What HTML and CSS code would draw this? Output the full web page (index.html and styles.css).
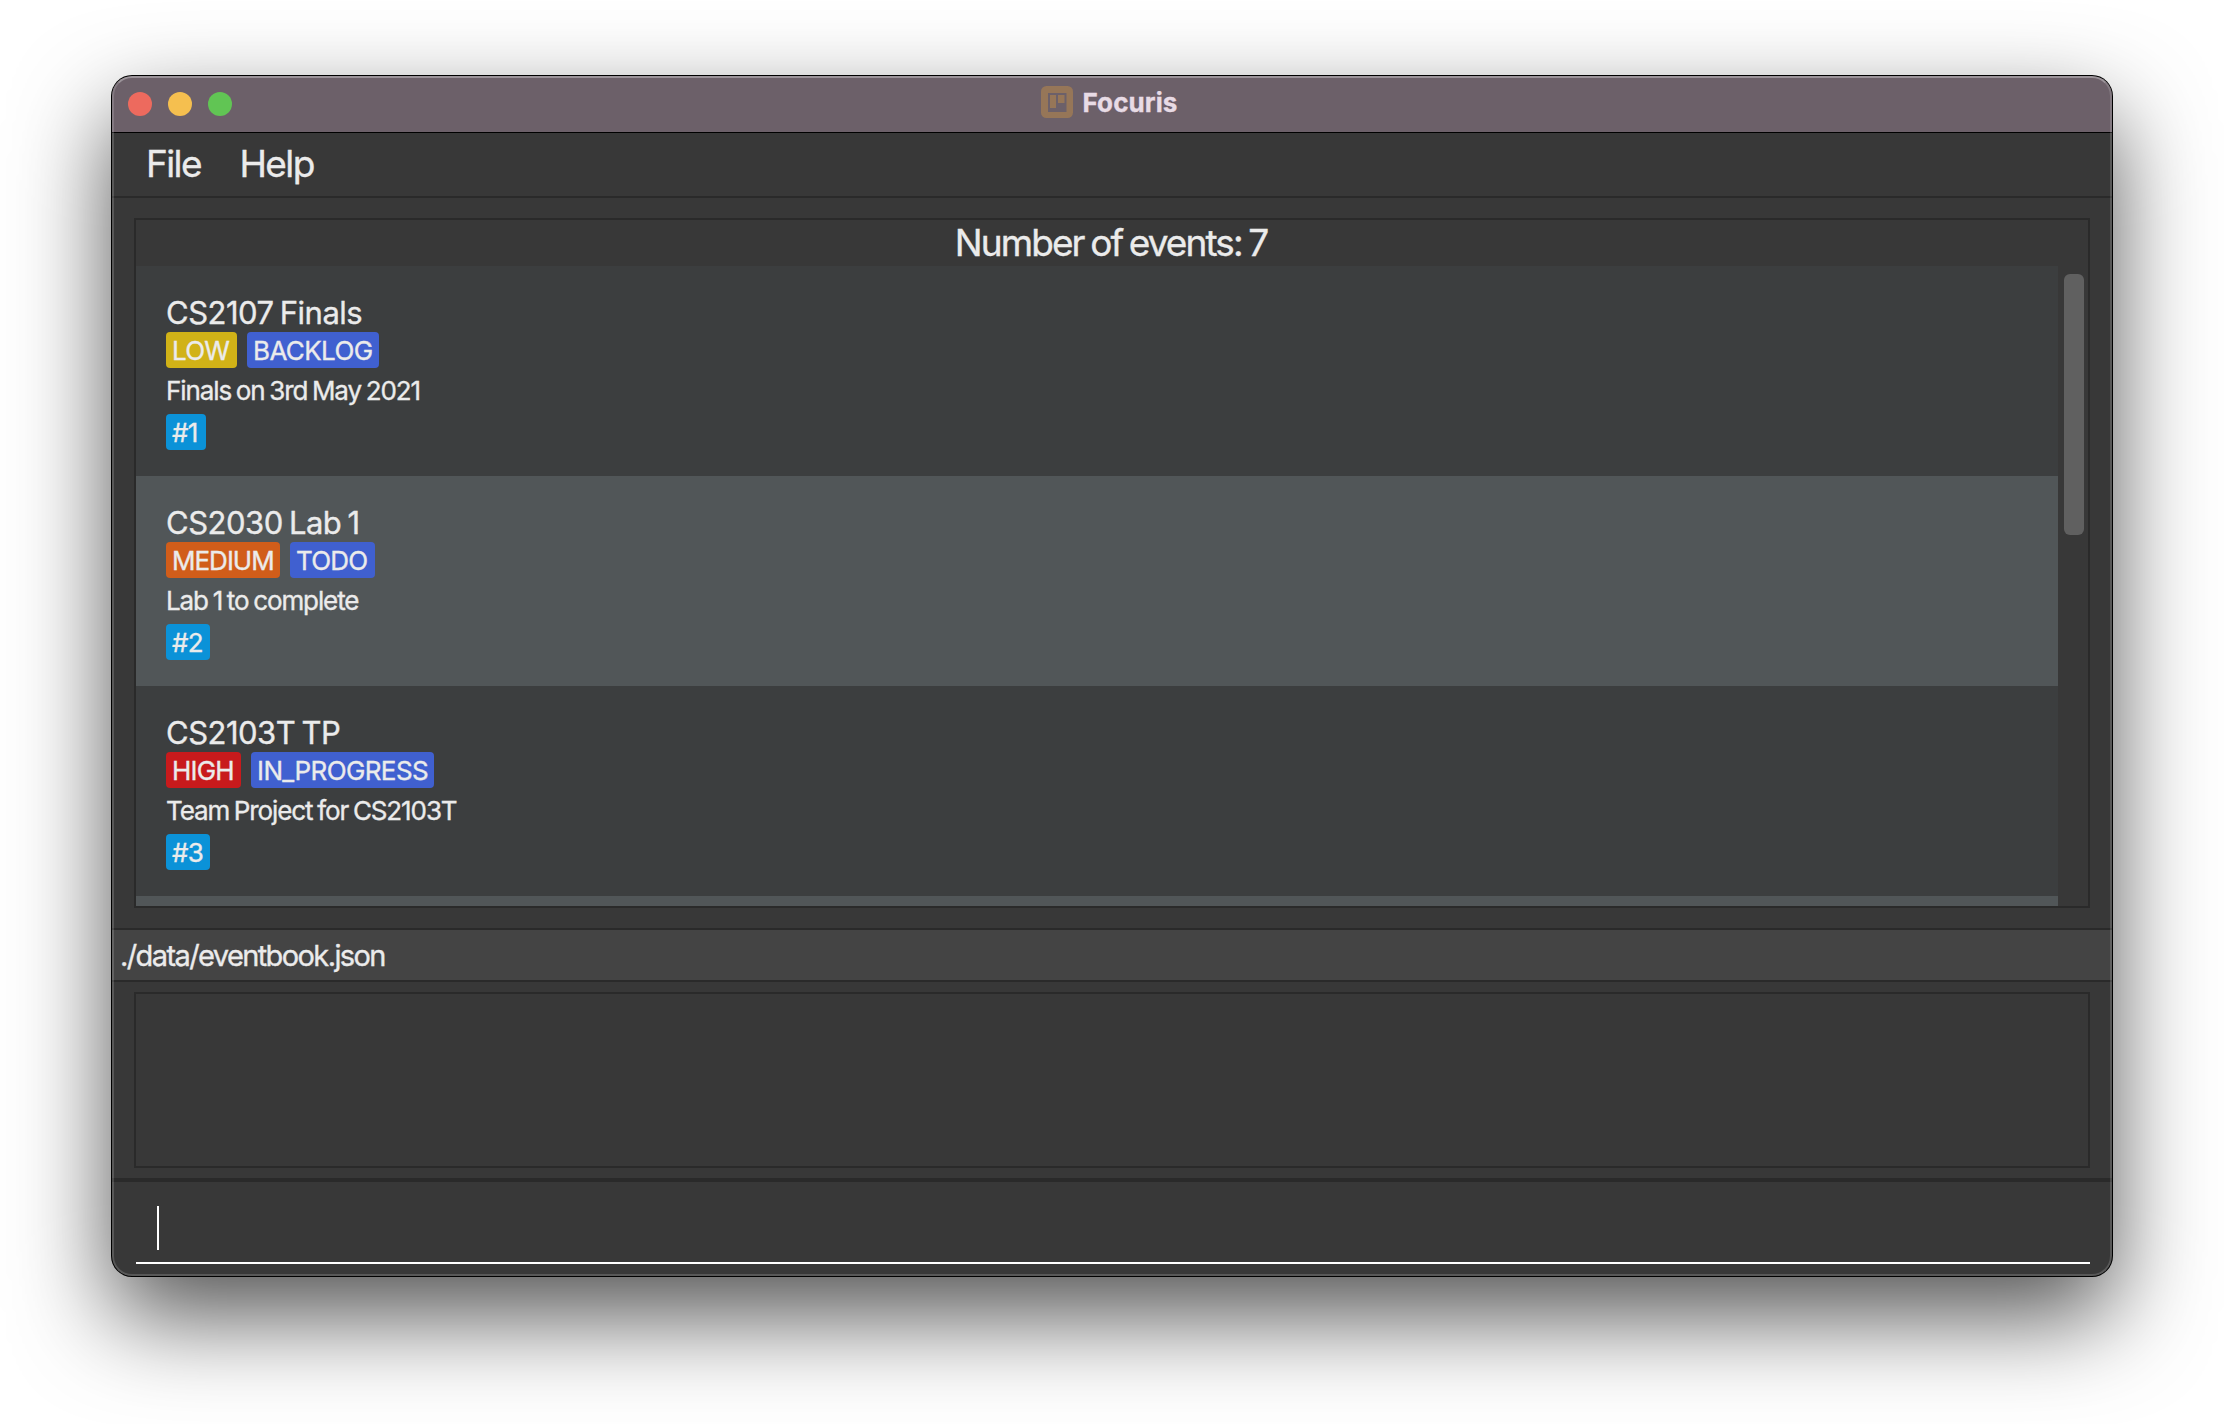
FILE: index.html
```html
<!DOCTYPE html>
<html lang="en">
<head>
<meta charset="utf-8">
<title>Focuris</title>
<link rel="stylesheet" href="styles.css">
</head>
<body>
<div class="window">
  <header class="titlebar">
    <div class="lights"><i class="light close"></i><i class="light minimize"></i><i class="light zoom"></i></div>
    <div class="title">
      <svg class="app-icon" viewBox="0 0 32 32" width="32" height="32">
        <rect width="32" height="32" rx="5.5" fill="#967658"/>
        <path fill="#6c6069" d="M7 7h18.500v19H7z"/>
        <path fill="#967658" d="M9 9h6v13H9zM17 9h6.500v8H17z"/>
      </svg>
      <span class="name">Focuris</span>
    </div>
  </header>
  <nav class="menubar"><span>File</span><span>Help</span></nav>
  <main class="main">
    <section class="panel">
      <h1 class="count">Number of events: 7</h1>
      <div class="scroll">
        <div class="list">
          <article class="event">
            <h2>CS2107 Finals</h2>
            <div class="tags"><span class="tag low">LOW</span><span class="tag status backlog">BACKLOG</span></div>
            <p>Finals on 3rd May 2021</p>
            <span class="tag id first">#1</span>
          </article>
          <article class="event alt">
            <h2>CS2030 Lab 1</h2>
            <div class="tags"><span class="tag medium">MEDIUM</span><span class="tag status todo">TODO</span></div>
            <p>Lab 1 to complete</p>
            <span class="tag id">#2</span>
          </article>
          <article class="event">
            <h2>CS2103T TP</h2>
            <div class="tags"><span class="tag high">HIGH</span><span class="tag status in-progress">IN_PROGRESS</span></div>
            <p>Team Project for CS2103T</p>
            <span class="tag id">#3</span>
          </article>
          <article class="event alt"></article>
        </div>
        <div class="scrollbar"><div class="thumb"></div></div>
      </div>
    </section>
  </main>
  <div class="path">./data/eventbook.json</div>
  <section class="result"><div class="result-box"></div></section>
  <footer class="command"><div class="field"><i class="caret"></i></div></footer>
</div>
</body>
</html>
```
FILE: styles.css
```css
* { box-sizing: border-box; margin: 0; padding: 0; }

body {
  width: 2224px;
  height: 1424px;
  padding: 76px 112px;
  overflow: hidden;
  background: #fff;
  color: #ebebeb;
  font-family: Inter, "Liberation Sans", sans-serif;
  white-space: nowrap;
  -webkit-text-stroke: 0.35px currentColor;
}

.window {
  position: relative;
  display: flex;
  flex-direction: column;
  width: 2000px;
  height: 1200px;
  border-radius: 20px;
  overflow: hidden;
  background: #383838;
  box-shadow: 0 0 0 1px #000, 0 40px 96px rgba(0, 0, 0, 0.68);
}

/* light rim along the inside of the window edge */
.window::after {
  content: "";
  position: absolute;
  inset: 0;
  border-radius: 20px;
  border: 2px solid rgba(255, 255, 255, 0.16);
  border-top-color: rgba(255, 255, 255, 0.32);
}

.titlebar {
  display: grid;
  grid-template-columns: 1fr auto 1fr;
  height: 57px;
  background: #6c6069;
  border-bottom: 1px solid #000;
}

.lights { display: flex; gap: 16px; padding: 16px; }
.light { width: 24px; height: 24px; border-radius: 50%; }
.close { background: #ed6a5e; }
.minimize { background: #f5bf4f; }
.zoom { background: #61c554; }

.title { display: flex; gap: 9px; padding: 10px 5px 0 0; color: #e8dbe5; }
.name { font-size: 26px; font-weight: 700; line-height: 34px; letter-spacing: 0.1px; }

.menubar {
  display: flex;
  gap: 38.5px;
  height: 65px;
  padding-left: 34px;
  border-bottom: 2px solid #2a2a2a;
  font-size: 37px;
  line-height: 62px;
  letter-spacing: -1.6px;
}

.main { padding: 20px 22px; height: 730px; }

.panel {
  display: flex;
  flex-direction: column;
  height: 690px;
  border: 2px solid #2a2a2a;
}

.count {
  height: 46px;
  padding-right: 2px;
  text-align: center;
  font-size: 37px;
  font-weight: 400;
  line-height: 46px;
  letter-spacing: -1.9px;
  word-spacing: -2px;
}

.scroll { display: flex; height: 640px; }
.list { flex: none; width: 1922px; overflow: hidden; }

.event { height: 210px; padding: 30px; background: #3c3e3f; }
.alt { background: #515658; }

.event h2 {
  height: 36px;
  font-size: 31px;
  font-weight: 400;
  line-height: 34px;
  letter-spacing: -0.5px;
  word-spacing: -2px;
}

.tags { display: flex; gap: 10px; }

.tag {
  display: inline-block;
  width: 44px;
  height: 36px;
  padding-left: 6px;
  border-radius: 4px;
  font-size: 26px;
  line-height: 37px;
  letter-spacing: -0.8px;
}

.low { width: 71px; background: #d1b217; }
.medium { width: 114px; background: #d15d1a; letter-spacing: -1px; }
.high { width: 75px; background: #c81a1c; }
.status { background: #4060d0; }
.backlog { width: 132px; letter-spacing: -0.6px; }
.todo { width: 85px; }
.in-progress { width: 183px; letter-spacing: -0.6px; }
.id { background: #0b92d8; }
.first { width: 40px; }

.event p {
  height: 46px;
  font-size: 26px;
  line-height: 46px;
  letter-spacing: -1.1px;
  word-spacing: -1.5px;
}

.scrollbar { padding: 8px 0 0 6px; }
.thumb { width: 20px; height: 261px; border-radius: 6px; background: #606060; }

.path {
  height: 54px;
  padding-left: 8px;
  border: solid #2a2a2a;
  border-width: 2px 0;
  background: #444;
  font-size: 29px;
  line-height: 51px;
  letter-spacing: -1.6px;
}

.result { height: 200px; padding: 10px 22px; border-bottom: 4px solid #2a2a2a; }
.result-box { height: 176px; border: 2px solid #2a2a2a; }

.command { padding: 24px 22px 0 24px; }
.field { height: 58px; padding-left: 21px; border-bottom: 2px solid #fff; }
.caret { display: block; width: 2px; height: 44px; background: #fff; }
```
